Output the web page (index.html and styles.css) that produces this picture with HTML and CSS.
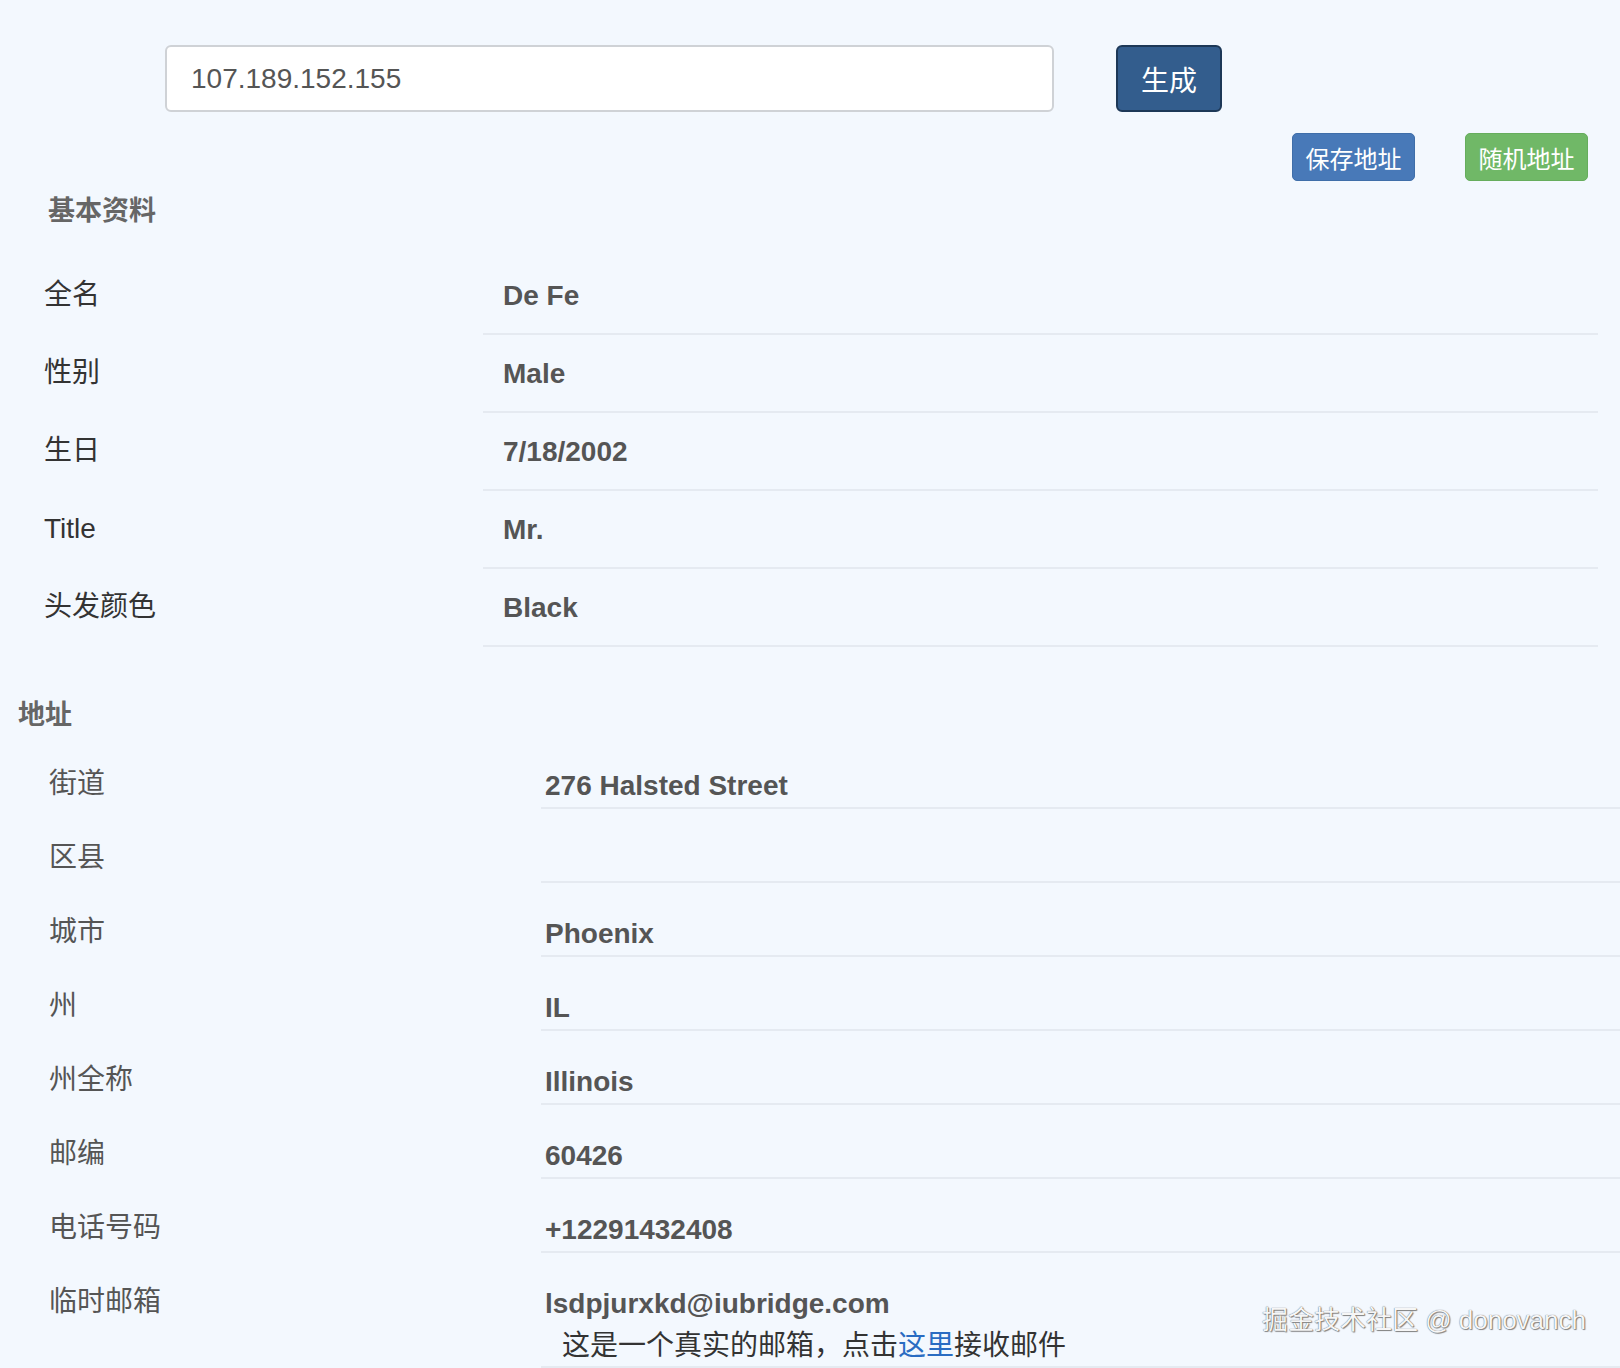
FILE: index.html
```html
<!DOCTYPE html>
<html lang="zh-CN">
<head>
    <meta charset="UTF-8">
    <meta name="viewport" content="width=device-width, initial-scale=1.0">
    <title>地址生成</title>
    <link rel="stylesheet" href="styles.css">
</head>
<body>
    <div class="page">
        <div class="search-bar">
            <input type="text" class="ip-input" value="107.189.152.155">
            <button class="btn btn-generate">生成</button>
        </div>

        <div class="actions">
            <button class="btn btn-save">保存地址</button>
            <button class="btn btn-random">随机地址</button>
        </div>

        <h3 class="section-title basic-title">基本资料</h3>
        <div class="basic">
            <div class="row">
                <div class="label">全名</div>
                <div class="value">De Fe</div>
            </div>
            <div class="row">
                <div class="label">性别</div>
                <div class="value">Male</div>
            </div>
            <div class="row">
                <div class="label">生日</div>
                <div class="value">7/18/2002</div>
            </div>
            <div class="row">
                <div class="label">Title</div>
                <div class="value">Mr.</div>
            </div>
            <div class="row">
                <div class="label">头发颜色</div>
                <div class="value">Black</div>
            </div>
        </div>

        <h3 class="section-title address-title">地址</h3>
        <div class="address">
            <div class="row">
                <div class="label">街道</div>
                <div class="value">276 Halsted Street</div>
            </div>
            <div class="row">
                <div class="label">区县</div>
                <div class="value"></div>
            </div>
            <div class="row">
                <div class="label">城市</div>
                <div class="value">Phoenix</div>
            </div>
            <div class="row">
                <div class="label">州</div>
                <div class="value">IL</div>
            </div>
            <div class="row">
                <div class="label">州全称</div>
                <div class="value">Illinois</div>
            </div>
            <div class="row">
                <div class="label">邮编</div>
                <div class="value">60426</div>
            </div>
            <div class="row">
                <div class="label">电话号码</div>
                <div class="value">+12291432408</div>
            </div>
            <div class="row">
                <div class="label">临时邮箱</div>
                <div class="value">
                    <div>lsdpjurxkd@iubridge.com</div>
                    <div class="mail-tip">这是一个真实的邮箱，点击<a href="#">这里</a>接收邮件</div>
                </div>
            </div>
        </div>

        <div class="watermark">掘金技术社区 @ donovanch</div>
    </div>
</body>
</html>
```

FILE: styles.css
```css
body {
    font-family: 'Liberation Sans', 'Noto Sans CJK SC', sans-serif;
    margin: 0;
    background-color: #f3f8fe;
    color: #333;
    overflow: hidden;
}
.page {
    position: relative;
    height: 1368px;
}
.search-bar {
    display: flex;
    gap: 62px;
    padding: 45px 0 0 165px;
}
.ip-input {
    width: 889px;
    height: 67px;
    box-sizing: border-box;
    border: 2px solid #cfd2d6;
    border-radius: 6px;
    background: #fff;
    padding: 0 24px;
    font-family: inherit;
    font-size: 28px;
    color: #555;
    outline: none;
}
.btn {
    font-family: inherit;
    color: #fff;
    cursor: pointer;
    box-sizing: border-box;
}
.btn-generate {
    width: 106px;
    height: 67px;
    background-color: #335d8d;
    border: 2px solid #1d3857;
    border-radius: 6px;
    font-size: 28px;
}
.actions {
    display: flex;
    justify-content: flex-end;
    gap: 50px;
    padding-right: 32px;
    margin-top: 21px;
}
.btn-save,
.btn-random {
    width: 123px;
    height: 48px;
    border-radius: 5px;
    font-size: 24px;
    padding: 0;
}
.btn-save {
    background-color: #4879b8;
    border: 1px solid #3f6ea9;
}
.btn-random {
    background-color: #70b867;
    border: 1px solid #66ad5d;
}
.section-title {
    margin: 0;
    font-size: 27px;
    line-height: 40px;
    font-weight: bold;
    color: #666;
}
.basic-title {
    padding-left: 48px;
    margin-top: 10px;
    margin-bottom: 26px;
}
.address-title {
    padding-left: 18px;
    margin-top: 48px;
}
.row {
    display: flex;
}
.label {
    font-size: 28px;
    line-height: 40px;
}
.value {
    flex: 1;
    font-size: 28px;
    line-height: 40px;
    font-weight: bold;
    color: #555;
    border-bottom: 2px solid #e5eaf1;
}
.basic .row {
    padding-left: 44px;
    padding-right: 22px;
}
.basic .label {
    width: 439px;
    padding-top: 18px;
}
.basic .value {
    box-sizing: border-box;
    height: 78px;
    padding: 19px 0 0 20px;
}
.address .row {
    padding-left: 49px;
}
.address .label {
    width: 492px;
    color: #555;
    padding-top: 29px;
}
.address .value {
    min-height: 74px;
    box-sizing: border-box;
    padding: 31px 0 0 4px;
}
.mail-tip {
    margin-top: 2px;
    padding-left: 17px;
    font-weight: normal;
    color: #333;
}
.mail-tip a {
    color: #2a6cc2;
    text-decoration: none;
}
.watermark {
    position: absolute;
    right: 34px;
    bottom: 32px;
    font-size: 26px;
    color: #f6f6f6;
    text-shadow: 0 0 1px #444, 1px 1px 1px #888;
}
```
